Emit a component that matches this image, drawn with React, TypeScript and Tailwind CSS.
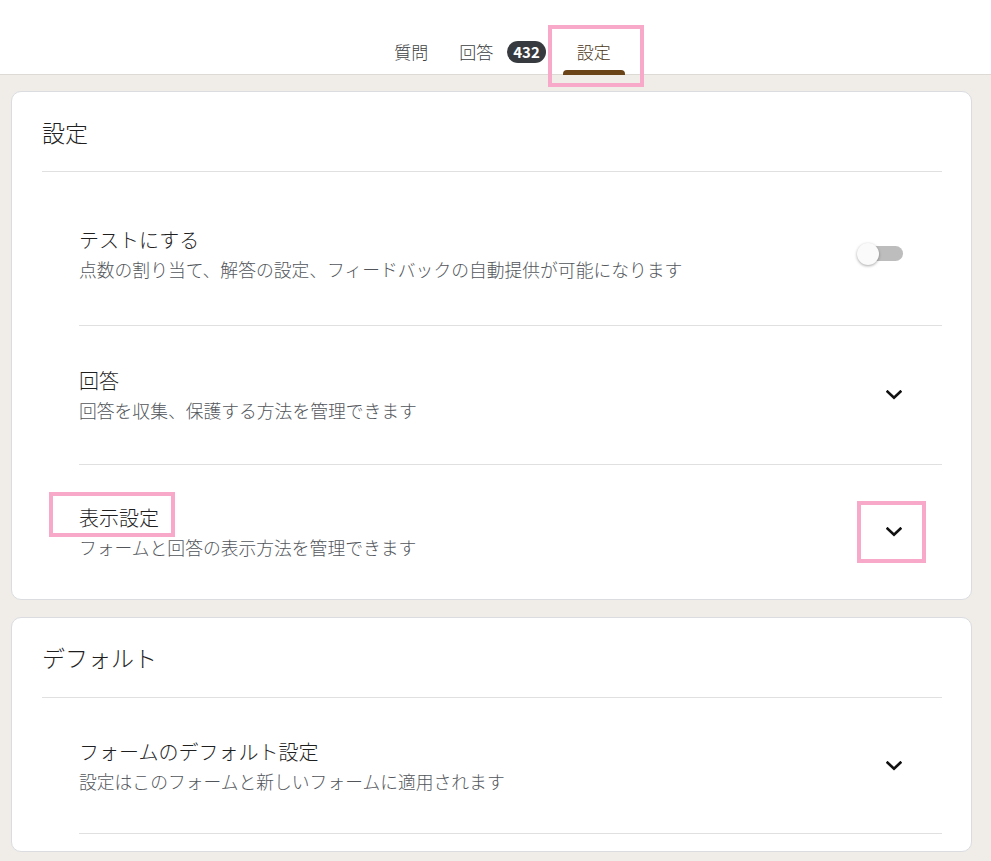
import React, { useState } from 'react';

const font = { fontFamily: '"Noto Sans CJK JP", "Noto Sans", sans-serif' };

function Chevron() {
  return (
    <svg width="16" height="10" viewBox="0 0 16 10" fill="none">
      <polyline points="1.6,1.6 8,7.6 14.4,1.6" stroke="#111" strokeWidth="2.6" strokeLinecap="square" />
    </svg>
  );
}

function Toggle({ on, onChange }: { on: boolean; onChange: () => void }) {
  return (
    <button onClick={onChange} className="relative w-[46px] h-[26px] mr-[39px] flex items-center">
      <span className="absolute left-[10px] right-0 h-[15px] rounded-full bg-[#bdbdbd]" />
      <span
        className={`absolute top-[2px] w-[22px] h-[22px] rounded-full bg-[#fafafa] shadow-[0_1px_3px_rgba(0,0,0,0.35)] transition-all ${on ? 'left-[24px]' : 'left-0'}`}
      />
    </button>
  );
}

function Highlight({ className }: { className: string }) {
  return <span className={`absolute border-4 border-[#f8a8c9] pointer-events-none z-10 ${className}`} />;
}

interface RowProps {
  title: string;
  desc: string;
  size?: string;
  marked?: boolean;
  control: React.ReactNode;
}

function Row({ title, desc, size = 'h-[139px] border-b border-[#e0e0e0]', marked, control }: RowProps) {
  return (
    <div className={`flex items-center ${size}`}>
      <div className="flex-1 pt-[2px]">
        <div className="text-[20px] leading-[28px] font-light text-[#1f1f1f]">
          <span className="relative inline-block">
            {title}
            {marked && <Highlight className="-left-[30px] -right-[16px] -top-[12px] -bottom-[5px]" />}
          </span>
        </div>
        <div className="text-[17.8px] leading-[30px] font-light text-[#52565b]">{desc}</div>
      </div>
      {control}
    </div>
  );
}

function ExpandButton({ marked }: { marked?: boolean }) {
  return (
    <button className="relative w-[40px] h-[40px] mr-[28px] flex items-center justify-center">
      <Chevron />
      {marked && <Highlight className="-left-[17px] -right-[12px] -top-[11px] -bottom-[11px]" />}
    </button>
  );
}

export default function App() {
  const [quiz, setQuiz] = useState(false);

  return (
    <div className="min-h-screen bg-[#f0ede9] overflow-hidden" style={font}>
      <header className="h-[75px] bg-white border-b border-[#dddad6] flex justify-center items-end pl-[14px]">
        <div className="flex items-end gap-[3px]">
          <button className="h-[45px] px-[14px] flex items-center text-[17px] font-light text-[#3c4043]">質問</button>
          <button className="h-[45px] px-[14px] flex items-center gap-[14px] text-[17px] font-light text-[#3c4043]">
            回答
            <span className="h-[22px] px-[6px] rounded-full bg-[#373a3e] text-white text-[15px] font-bold leading-[22px]">432</span>
          </button>
          <button className="relative h-[45px] px-[14px] flex items-center text-[17px] font-light text-[#4b3620]">
            設定
            <span className="absolute left-0 right-0 -bottom-[1px] h-[5px] rounded-t-[4px] bg-[#6a4317]" />
            <Highlight className="-left-[15px] -right-[19px] -top-[4px] -bottom-[13px]" />
          </button>
        </div>
      </header>

      <main className="pt-[16px] pl-[11px] pr-[19px] flex flex-col gap-[17px]">
        <section className="bg-white rounded-[10px] border border-[#dadce0] pl-[30px] pr-[29px]">
          <h2 className="h-[80px] pt-[26px] text-[23px] leading-[28px] font-light text-[#1f1f1f] border-b border-[#e0e0e0]">設定</h2>
          <div className="pl-[37px]">
            <div className="pt-[10px]">
              <Row
                size="h-[144px] border-b border-[#e0e0e0]"
                title="テストにする"
                desc="点数の割り当て、解答の設定、フィードバックの自動提供が可能になります"
                control={<Toggle on={quiz} onChange={() => setQuiz(!quiz)} />}
              />
            </div>
            <Row title="回答" desc="回答を収集、保護する方法を管理できます" control={<ExpandButton />} />
            <Row size="h-[134px]" marked title="表示設定" desc="フォームと回答の表示方法を管理できます" control={<ExpandButton marked />} />
          </div>
        </section>

        <section className="bg-white rounded-[10px] border border-[#dadce0] pl-[30px] pr-[29px] pb-[17px]">
          <h2 className="h-[80px] pt-[25px] text-[23px] leading-[28px] font-light text-[#1f1f1f] border-b border-[#e0e0e0]">デフォルト</h2>
          <div className="pl-[37px]">
            <Row
              size="h-[136px] border-b border-[#e0e0e0]"
              title="フォームのデフォルト設定"
              desc="設定はこのフォームと新しいフォームに適用されます"
              control={<ExpandButton />}
            />
          </div>
        </section>
      </main>
    </div>
  );
}
